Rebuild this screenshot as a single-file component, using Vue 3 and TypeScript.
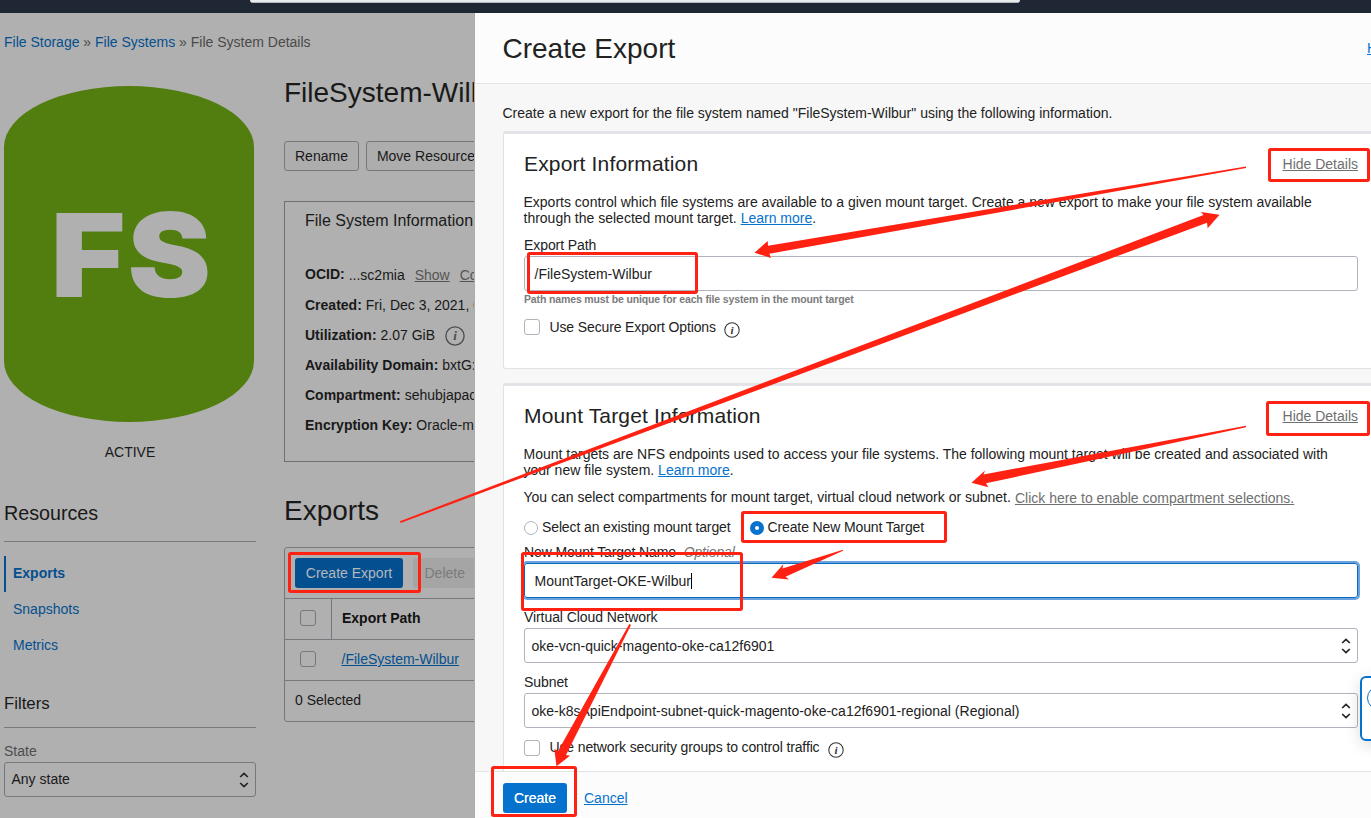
<script setup lang="ts">
interface DetailRow {
  label: string
  value: string
  info?: boolean
}

interface Box {
  x: number
  y: number
  r: number
  b: number
}

const details: DetailRow[] = [
  { label: 'Created:', value: 'Fri, Dec 3, 2021, 0' },
  { label: 'Utilization:', value: '2.07 GiB', info: true },
  { label: 'Availability Domain:', value: 'bxtG:' },
  { label: 'Compartment:', value: 'sehubjapac' },
  { label: 'Encryption Key:', value: 'Oracle-m' },
]

const resources: string[] = ['Exports', 'Snapshots', 'Metrics']

const boxes: Box[] = [
  { x: 1268, y: 148, r: 1370, b: 182 },
  { x: 1266, y: 401, r: 1370, b: 436 },
  { x: 527, y: 252, r: 698, b: 294 },
  { x: 288, y: 552, r: 421, b: 593 },
  { x: 741, y: 511, r: 947, b: 543 },
  { x: 521, y: 552, r: 743, b: 611 },
  { x: 491, y: 766, r: 577, b: 817 },
]

const arrows: string[] = [
  '1246,166.5 768,245.7 767.7,241 754.5,252.7 771,258 769.3,253.7 1246,168',
  '400,521.2 1203.5,215 1201,212 1219.5,214.7 1207.7,228.3 1207,222.7 400.5,523',
  '1246,425.8 983.5,474.5 985,470.5 971.5,482.8 988.3,487.3 986,483.3 1246,427.3',
  '843,549.8 782.5,568.5 783.3,564.2 771.5,577.8 789,579.5 785.5,576.7 843,550.8',
  '629.3,624 558,751 554.3,749 556.5,766.3 570,755.7 566,755 631,625',
]
</script>

<template>
  <div class="screen">
    <header class="topbar"><div class="search"></div></header>

    <div class="body">
      <section class="page">
        <nav class="crumbs">
          <a>File Storage</a> » <a>File Systems</a> » <span>File System Details</span>
        </nav>

        <div class="columns">
          <aside class="side">
            <div class="fs-icon">
              <svg width="250" height="336" viewBox="0 0 250 336">
                <text x="46.5" y="211" textLength="75" lengthAdjust="spacingAndGlyphs" class="fs-letter">F</text>
                <text x="123.5" y="211" textLength="83.5" lengthAdjust="spacingAndGlyphs" class="fs-letter">S</text>
              </svg>
            </div>
            <div class="state">ACTIVE</div>
            <h3 class="side-title">Resources</h3>
            <ul class="links">
              <li v-for="(r, i) in resources" :key="r" :class="{ active: i === 0 }">{{ r }}</li>
            </ul>
            <h4 class="filters">Filters</h4>
            <label class="state-label">State</label>
            <div class="select dim">
              <span>Any state</span>
              <svg width="10" height="16" viewBox="0 0 10 16"><path d="M1.2 5 5 1.4 8.8 5M1.2 11 5 14.6 8.8 11" /></svg>
            </div>
          </aside>

          <main class="main">
            <h1 class="name">FileSystem-Wilbur</h1>
            <div class="actions">
              <button>Rename</button>
              <button>Move Resource</button>
            </div>
            <div class="info-panel">
              <h4>File System Information</h4>
              <p class="ocid"><b>OCID:</b> <span>...sc2mia</span><a>Show</a><a>Copy</a></p>
              <p v-for="d in details" :key="d.label">
                <b>{{ d.label }}</b> {{ d.value }}
                <svg v-if="d.info" class="info big" viewBox="0 0 20 20">
                  <circle cx="10" cy="10" r="9.1" />
                  <text x="10" y="14.3">i</text>
                </svg>
              </p>
            </div>
            <h2 class="exports">Exports</h2>
            <div class="table">
              <div class="toolbar">
                <button class="primary">Create Export</button>
                <button class="disabled">Delete</button>
              </div>
              <div class="row head">
                <div class="cell-check"><i class="check"></i></div>
                <b>Export Path</b>
              </div>
              <div class="row">
                <div class="cell-check"><i class="check"></i></div>
                <a>/FileSystem-Wilbur</a>
              </div>
              <div class="foot">0 Selected</div>
            </div>
          </main>
        </div>
      </section>

      <section class="drawer">
        <div class="drawer-head">
          <h1>Create Export</h1>
          <a>Help</a>
        </div>
        <div class="drawer-body">
          <p class="intro">Create a new export for the file system named "FileSystem-Wilbur" using the following information.</p>

          <div class="card first">
            <div class="card-head"><h2>Export Information</h2><a>Hide Details</a></div>
            <p class="para">
              Exports control which file systems are available to a given mount target. Create a new export to make your file system available<br />through
              the selected mount target. <a>Learn more</a>.
            </p>
            <label class="label path-label">Export Path</label>
            <div class="input">/FileSystem-Wilbur</div>
            <div class="hint">Path names must be unique for each file system in the mount target</div>
            <div class="option">
              <i class="check"></i><span>Use Secure Export Options</span>
              <svg class="info" viewBox="0 0 20 20">
                <circle cx="10" cy="10" r="9" />
                <text x="10" y="14.6">i</text>
              </svg>
            </div>
          </div>

          <div class="card second">
            <div class="card-head"><h2>Mount Target Information</h2><a>Hide Details</a></div>
            <p class="para">
              Mount targets are NFS endpoints used to access your file systems. The following mount target will be created and associated with<br />your
              new file system. <a>Learn more</a>.
            </p>
            <p class="para compart">
              <span>You can select compartments for mount target, virtual cloud network or subnet.</span><a>Click here to enable compartment selections.</a>
            </p>
            <div class="radios">
              <i class="radio"></i><span>Select an existing mount target</span>
              <i class="radio on"></i><span>Create New Mount Target</span>
            </div>
            <label class="label name-label">New Mount Target Name <em>Optional</em></label>
            <div class="input focus">MountTarget-OKE-Wilbur<i class="caret"></i></div>
            <label class="label vcn-label">Virtual Cloud Network</label>
            <div class="select">
              <span>oke-vcn-quick-magento-oke-ca12f6901</span>
              <svg width="10" height="16" viewBox="0 0 10 16"><path d="M1.2 5 5 1.4 8.8 5M1.2 11 5 14.6 8.8 11" /></svg>
            </div>
            <label class="label subnet-label">Subnet</label>
            <div class="select">
              <span>oke-k8sApiEndpoint-subnet-quick-magento-oke-ca12f6901-regional (Regional)</span>
              <svg width="10" height="16" viewBox="0 0 10 16"><path d="M1.2 5 5 1.4 8.8 5M1.2 11 5 14.6 8.8 11" /></svg>
            </div>
            <div class="option nsg">
              <i class="check"></i><span>Use network security groups to control traffic</span>
              <svg class="info" viewBox="0 0 20 20">
                <circle cx="10" cy="10" r="9" />
                <text x="10" y="14.6">i</text>
              </svg>
            </div>
          </div>
        </div>
        <footer class="drawer-foot">
          <button class="create">Create</button>
          <a>Cancel</a>
        </footer>
      </section>
    </div>

    <div class="help-widget"><i></i></div>

    <svg class="marks" width="1371" height="818" viewBox="0 0 1371 818">
      <rect
        v-for="(m, i) in boxes"
        :key="i"
        :x="m.x + 1.5"
        :y="m.y + 1.5"
        :width="m.r - m.x - 3"
        :height="m.b - m.y - 3"
        rx="1.2"
      />
      <polygon v-for="(a, i) in arrows" :key="'a' + i" :points="a" />
    </svg>
  </div>
</template>

<style>
html,
body {
  margin: 0;
  overflow: hidden;
}
</style>

<style scoped>
.screen {
  position: relative;
  width: 1371px;
  height: 818px;
  overflow: hidden;
  display: flex;
  flex-direction: column;
  font: 14px/16px 'Liberation Sans', Arial, sans-serif;
  color: #222;
  background: #b0b0b0;
}
.screen * {
  box-sizing: border-box;
}
h1,
h2,
h3,
h4,
p,
ul {
  margin: 0;
  padding: 0;
  font-weight: normal;
  white-space: nowrap;
}
button {
  font: inherit;
  padding: 0 10px;
  height: 30px;
  border-radius: 3px;
  white-space: nowrap;
  flex: none;
}
label {
  display: block;
}
.topbar {
  height: 13px;
  flex: none;
  background: #1e2733;
}
.search {
  width: 770px;
  height: 3px;
  margin-left: 250px;
  background: #e9eaec;
  border-bottom: 1px solid #b4b7bb;
  border-radius: 0 0 3px 3px;
}
.body {
  display: flex;
  height: 805px;
}
.page {
  width: 475px;
  flex: none;
  overflow: hidden;
  border-right: 1px solid #acacac;
  padding: 21px 0 0 4px;
  color: #191919;
}
.page a {
  color: #044f8f;
}
.crumbs {
  color: #4a4a4a;
  white-space: nowrap;
}
.columns {
  display: flex;
  gap: 28px;
}
.side {
  width: 252px;
  flex: none;
}
.fs-icon {
  width: 250px;
  height: 336px;
  margin-top: 36px;
  background: #517e0f;
  border-radius: 125px / 61px;
}
.fs-icon svg {
  display: block;
}
.fs-letter {
  font-family: Inter, 'Liberation Sans', sans-serif;
  font-weight: 900;
  font-size: 116px;
  fill: #b0b0b0;
}
.state {
  margin-top: 22px;
  text-align: center;
}
.side-title {
  font-size: 19.7px;
  line-height: 24px;
  margin-top: 41px;
  padding-bottom: 16px;
  border-bottom: 1px solid #75797e;
}
.links {
  list-style: none;
  margin-top: 14px;
}
.links li {
  height: 36px;
  line-height: 34px;
  padding-left: 9px;
  color: #044f8f;
}
.links .active {
  border-left: 2px solid #044f8f;
  padding-left: 7px;
  font-weight: bold;
}
.filters {
  font-size: 16.8px;
  line-height: 20px;
  margin-top: 30px;
  padding-bottom: 13px;
  border-bottom: 1px solid #75797e;
}
.state-label {
  margin-top: 15px;
  color: #4d4d4d;
}
.select {
  display: flex;
  align-items: center;
  justify-content: space-between;
  height: 35px;
  padding: 0 6px 0 6.5px;
  border: 1px solid #aeb3bc;
  border-radius: 3px;
  white-space: nowrap;
}
.select svg path {
  fill: none;
  stroke: #222;
  stroke-width: 1.7;
}
.dim {
  margin-top: 3px;
  border-color: #75797e;
}
.dim span {
  padding-bottom: 2px;
}
.main {
  width: 190px;
  flex: none;
}
.name {
  font-size: 28px;
  line-height: 32px;
  margin-top: 27px;
}
.actions {
  display: flex;
  gap: 7px;
  margin-top: 32px;
}
.actions button {
  border: 1px solid #75797e;
  background: #adadad;
  color: #191919;
}
.info-panel {
  height: 261px;
  width: 300px;
  margin-top: 30px;
  border: 1px solid #707070;
  padding: 10px 0 0 20px;
}
.info-panel h4 {
  font-size: 16px;
  line-height: 18px;
}
.info-panel p {
  height: 30px;
  display: flex;
  align-items: center;
  gap: 4px;
}
.info-panel .ocid {
  height: 31px;
  margin-top: 29px;
  padding-bottom: 1px;
}
.ocid span {
  padding-top: 2px;
}
.ocid a {
  color: #555;
  text-decoration: underline;
  margin-left: 6px;
  padding-top: 2px;
}
.info {
  width: 16px;
  height: 16px;
  flex: none;
}
.info circle {
  fill: none;
  stroke: #333;
  stroke-width: 1.3;
}
.info text {
  font: italic bold 14px 'Liberation Serif', serif;
  text-anchor: middle;
  fill: #333;
}
.info.big {
  width: 20px;
  height: 20px;
  margin: 2px 0 0 6px;
}
.info.big circle {
  stroke: #4c4c4c;
}
.info.big text {
  font-size: 13px;
  fill: #4c4c4c;
}
.exports {
  font-size: 28px;
  line-height: 32px;
  margin-top: 33px;
}
.table {
  width: 300px;
  height: 175px;
  margin-top: 20px;
  border: 1px solid #75797e;
  border-radius: 3px;
}
.toolbar {
  display: flex;
  gap: 10px;
  height: 50px;
  padding: 10px 0 0 10px;
}
.toolbar .primary {
  width: 108px;
  border: 0;
  background: #044f8f;
  color: #b4b8bc;
}
.toolbar .disabled {
  width: 66px;
  border: 0;
  background: #a5a5a5;
  color: #7b7b7b;
  text-align: left;
  padding-left: 11.5px;
}
.row {
  height: 41px;
  display: flex;
  align-items: center;
  border-top: 1px solid #75797e;
}
.row a {
  text-decoration: underline;
  margin-left: 9.5px;
  padding-bottom: 2px;
}
.cell-check {
  width: 47px;
  height: 40px;
  display: flex;
  align-items: center;
  padding: 0 0 2px 15px;
}
.head .cell-check {
  border-right: 1px solid #75797e;
}
.head b {
  padding: 0 0 2px 10px;
  color: #111;
}
.check {
  width: 16px;
  height: 16px;
  flex: none;
  border: 1px solid #aeb3bc;
  border-radius: 3px;
}
.row .check {
  border-color: #75797e;
}
.foot {
  border-top: 1px solid #75797e;
  padding: 11px 10px;
}

.drawer {
  width: 896px;
  flex: none;
  display: flex;
  flex-direction: column;
  background: #f7f7f7;
  overflow: hidden;
}
.drawer a {
  color: #0572ce;
  text-decoration: underline;
}
.drawer-head {
  height: 71px;
  flex: none;
  display: flex;
  justify-content: space-between;
  background: #fcfcfc;
  border-bottom: 1px solid #e4e4e6;
  padding-left: 27.5px;
}
.drawer-head h1 {
  font-size: 28px;
  line-height: 32px;
  margin-top: 20px;
}
.drawer-head a {
  width: 4px;
  margin-top: 27px;
}
.drawer-body {
  height: 687px;
  flex: none;
  overflow: hidden;
  padding: 21px 0 0 28px;
}
.intro {
  height: 26px;
  margin-left: -0.5px;
}
.card {
  width: 880px;
  background: #fff;
  border: 1px solid #e1e2e6;
  border-top: 3px solid #e3e3e7;
  border-radius: 3px 0 0 3px;
  padding-left: 20px;
}
.card > * {
  width: 834px;
}
.first {
  height: 238px;
}
.second {
  height: 420px;
  margin-top: 14px;
}
.card-head {
  display: flex;
  justify-content: space-between;
  padding-top: 18px;
}
.card-head h2 {
  font-size: 21px;
  line-height: 24px;
  letter-spacing: 0.15px;
}
.card .card-head a {
  color: #6f6f6f;
  margin-top: 4px;
}
.para {
  margin-top: 18px;
  margin-left: -0.5px;
  white-space: nowrap;
}
.compart {
  display: flex;
  gap: 4px;
  margin-top: 11px;
}
.card .compart a {
  color: #6f6f6f;
  margin-top: 1px;
}
.label {
  height: 16px;
  letter-spacing: -0.08px;
}
.path-label {
  margin-top: 11px;
}
.input {
  height: 35px;
  margin-top: 3px;
  border: 1px solid #aeb3bc;
  border-radius: 3px;
  padding: 9px 9.5px;
  white-space: nowrap;
}
.hint {
  font-size: 10.5px;
  font-weight: bold;
  line-height: 12px;
  letter-spacing: -0.135px;
  color: #7c7c7c;
  margin-top: 2px;
}
.option {
  display: flex;
  height: 20px;
  margin-top: 14px;
}
.option span {
  margin-left: 9.5px;
  letter-spacing: -0.13px;
}
.option .info {
  margin: 3px 0 0 8px;
}
.radios {
  display: flex;
  margin-top: 13px;
  letter-spacing: -0.12px;
}
.radio {
  width: 14px;
  height: 14px;
  margin: 2px 4px 0 0;
  border: 1px solid #aeb3bc;
  border-radius: 50%;
}
.radio.on {
  margin-left: 19px;
  border: 5px solid #0572ce;
}
.name-label {
  margin-top: 9px;
  letter-spacing: -0.13px;
}
.name-label em {
  color: #777;
  margin-left: 4px;
}
.focus {
  border-color: #0a68bd;
  box-shadow: 0 0 0 2px #69a3df;
}
.caret {
  display: inline-block;
  width: 1px;
  height: 16px;
  background: #000;
  vertical-align: top;
}
.vcn-label {
  margin-top: 11px;
}
.subnet-label {
  margin-top: 11px;
}
.label + .select {
  margin-top: 3px;
}
.nsg {
  margin-top: 12px;
}
.nsg span {
  margin-top: -1px;
}
.option.nsg .info {
  margin-top: 2px;
}
.drawer-foot {
  height: 47px;
  flex: none;
  display: flex;
  gap: 17px;
  background: #fcfcfc;
  border-top: 1px solid #e4e4e6;
  padding: 11px 0 0 28px;
}
.create {
  width: 64px;
  border: 0;
  background: #0572ce;
  color: #fff;
  text-shadow: 0 0 0.6px #fff;
}
.drawer-foot a {
  margin-top: 7px;
}
.help-widget {
  position: absolute;
  left: 1360px;
  top: 676px;
  width: 40px;
  height: 65px;
  background: #fff;
  border: 2px solid #0572ce;
  border-radius: 6px;
  box-shadow: 0 4px 16px rgba(0, 0, 0, 0.14);
}
.help-widget i {
  display: block;
  width: 24px;
  height: 24px;
  margin: 8px 0 0 5px;
  border: 1.5px solid #0572ce;
  border-radius: 50%;
}
.marks {
  position: absolute;
  left: 0;
  top: 0;
}
.marks rect {
  fill: none;
  stroke: #ff2112;
  stroke-width: 3;
}
.marks polygon {
  fill: #ff2112;
}
</style>
